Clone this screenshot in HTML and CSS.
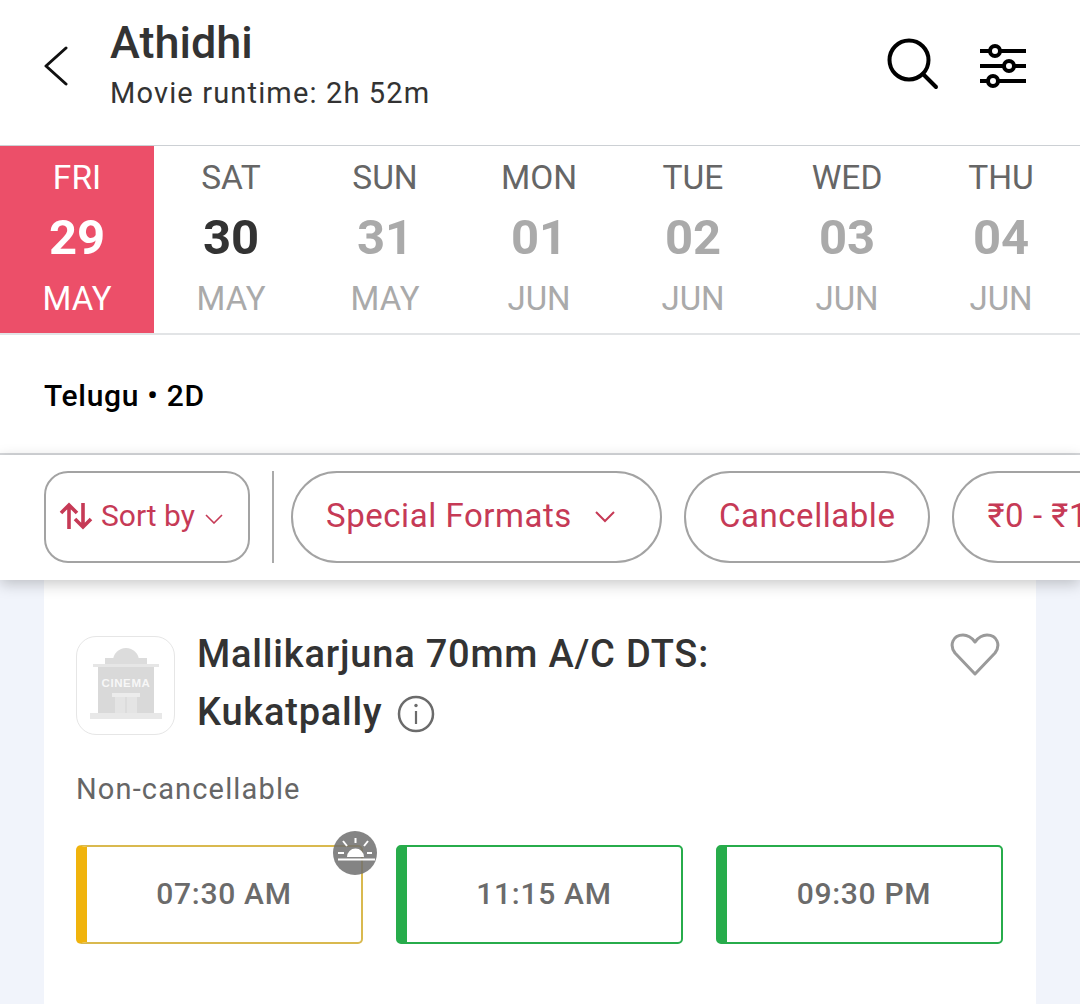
FILE: index.html
```html
<!DOCTYPE html>
<html lang="en">
<head>
<meta charset="UTF-8">
<meta name="viewport" content="width=device-width, initial-scale=1.0">
<title>Athidhi - Showtimes</title>
<link rel="stylesheet" href="styles.css">
</head>
<body>

<header class="top-bar">
  <svg class="back-icon" width="24" height="40" viewBox="0 0 24 40"><path d="M22 2 L2 20 L22 38" fill="none" stroke="#111" stroke-width="3" stroke-linecap="round" stroke-linejoin="round"/></svg>
  <div class="movie-info">
    <h1>Athidhi</h1>
    <p>Movie runtime: 2h 52m</p>
  </div>
  <div class="top-actions">
    <svg class="search-icon" width="52" height="52" viewBox="0 0 52 52"><circle cx="22" cy="22" r="19.5" fill="none" stroke="#000" stroke-width="4"/><path d="M36 36 L49 49" stroke="#000" stroke-width="4" stroke-linecap="round"/></svg>
    <svg width="46" height="44" viewBox="0 0 46 44">
      <path d="M0 7H46M0 22H46M0 37H46" stroke="#000" stroke-width="4"/>
      <circle cx="15" cy="7" r="5" fill="#fff" stroke="#000" stroke-width="4"/>
      <circle cx="29" cy="22" r="5" fill="#fff" stroke="#000" stroke-width="4"/>
      <circle cx="13" cy="37" r="5" fill="#fff" stroke="#000" stroke-width="4"/>
    </svg>
  </div>
</header>

<nav class="dates">
  <div class="date active"><span class="day">FRI</span><span class="num">29</span><span class="month">MAY</span></div>
  <div class="date next"><span class="day">SAT</span><span class="num">30</span><span class="month">MAY</span></div>
  <div class="date"><span class="day">SUN</span><span class="num">31</span><span class="month">MAY</span></div>
  <div class="date"><span class="day">MON</span><span class="num">01</span><span class="month">JUN</span></div>
  <div class="date"><span class="day">TUE</span><span class="num">02</span><span class="month">JUN</span></div>
  <div class="date"><span class="day">WED</span><span class="num">03</span><span class="month">JUN</span></div>
  <div class="date"><span class="day">THU</span><span class="num">04</span><span class="month">JUN</span></div>
</nav>

<div class="lang-row">Telugu &bull; 2D</div>

<div class="filters">
  <button class="chip sort">
    <svg width="36" height="28" viewBox="0 0 36 28"><path d="M11 27V3M3 11L11 3L19 11M25 1V25M17 17L25 25L33 17" fill="none" stroke="#c63a56" stroke-width="3.6"/></svg>
    <span>Sort by</span>
    <svg class="sort-caret" width="20" height="10" viewBox="0 0 20 10"><path d="M2 1L10 9L18 1" fill="none" stroke="#c63a56" stroke-width="1.6"/></svg>
  </button>
  <div class="divider"></div>
  <button class="chip pill">
    Special Formats
    <svg class="chip-caret" width="22" height="12" viewBox="0 0 22 12"><path d="M2 1L11 10L20 1" fill="none" stroke="#c63a56" stroke-width="2"/></svg>
  </button>
  <button class="chip pill">Cancellable</button>
  <button class="chip pill">&#8377;0 - &#8377;100</button>
</div>

<main class="list">
  <section class="card">
    <div class="cinema-head">
      <div class="logo">
        <svg width="72" height="76" viewBox="0 0 72 76">
          <rect x="0" y="65" width="72" height="6" fill="#e8e8e8"/>
          <circle cx="36" cy="13" r="13" fill="#dcdcdc"/>
          <rect x="15" y="10" width="42" height="18" fill="#dcdcdc"/>
          <rect x="3" y="16" width="66" height="3" fill="#e6e6e6"/>
          <rect x="8" y="19" width="56" height="46" fill="#d9d9d9"/>
          <text x="36" y="39" text-anchor="middle" class="logo-text">CINEMA</text>
          <rect x="22" y="45" width="28" height="4" fill="#ececec"/>
          <rect x="25" y="49" width="22" height="16" fill="#e4e4e4"/>
          <path d="M36 49V65" stroke="#d4d4d4" stroke-width="1"/>
        </svg>
      </div>
      <h2>Mallikarjuna 70mm A/C DTS: Kukatpally
        <svg class="info-icon" width="38" height="38" viewBox="0 0 38 38"><circle cx="19" cy="19" r="17" fill="none" stroke="#6b6b6b" stroke-width="2.5"/><path d="M19 16V29" stroke="#6b6b6b" stroke-width="2.2"/><circle cx="19" cy="10.5" r="1.7" fill="#6b6b6b"/></svg>
      </h2>
      <svg class="heart" width="50" height="44" viewBox="0 0 50 44"><path d="M25 41L5 20C-1 12 3 2 13 2C18 2 22 5 25 9C28 5 32 2 37 2C47 2 51 12 45 20Z" fill="none" stroke="#9a9a9a" stroke-width="3" stroke-linejoin="round"/></svg>
    </div>
    <p class="note">Non-cancellable</p>
    <div class="times">
      <a class="time morning">07:30 AM
        <span class="badge">
          <svg width="44" height="44" viewBox="0 0 44 44">
            <path d="M14 26A8.5 8.5 0 0 1 31 26Z" fill="#fff"/>
            <path d="M5 28.5H42" stroke="#fff" stroke-width="2"/>
            <path d="M22.5 7V12M10 10L14 15M35 10L31 15M5 22H11M34 22H39" stroke="#fff" stroke-width="2"/>
          </svg>
        </span>
      </a>
      <a class="time">11:15 AM</a>
      <a class="time">09:30 PM</a>
    </div>
  </section>
</main>

</body>
</html>
```

FILE: styles.css
```css
* { box-sizing: border-box; }
html, body { height: 100%; }
body {
  margin: 0;
  font-family: Roboto, "Liberation Sans", sans-serif;
  background: #f1f4fb;
  overflow: hidden;
}

/* Top bar */
.top-bar {
  height: 147px;
  background: #fff;
  border-bottom: 2px solid #ccd0d4;
  display: flex;
  align-items: center;
  padding: 0 54px 18px 44px;
}
.back-icon { margin-right: 42px; margin-top: 4px; }
.movie-info { flex: 1; }
.movie-info h1 { margin: 0; font-size: 45px; line-height: 50px; font-weight: 500; color: #333; }
.movie-info p { margin: 8px 0 0; font-size: 29px; line-height: 34px; color: #333; letter-spacing: 1.15px; }
.top-actions { display: flex; align-items: center; gap: 41px; margin-top: 4px; }
.search-icon { margin-top: -3px; }

/* Date strip */
.dates {
  display: flex;
  height: 189px;
  background: #fff;
  border-bottom: 2px solid #e2e4e6;
  margin-top: -1px;
}
.date {
  width: 154px;
  flex-shrink: 0;
  display: flex;
  flex-direction: column;
  align-items: center;
  color: #aaa;
}
.date .day { margin-top: 14px; font-size: 33.5px; line-height: 36px; color: #666; }
.date .num { margin-top: 14px; font-size: 49px; line-height: 56px; font-weight: 700; }
.date .month { margin-top: 14px; font-size: 33px; line-height: 38px; }
.date.next .num { color: #333; }
.date.active { background: #ec4f69; color: #fff; }
.date.active .day { color: #fff; }

/* Language row */
.lang-row {
  height: 120px;
  background: #fff;
  border-bottom: 2px solid #d6d8db;
  display: flex;
  align-items: center;
  padding: 3px 0 0 44px;
  font-size: 30px;
  font-weight: 500;
  letter-spacing: 0.7px;
  color: #000;
}

/* Filters */
.filters {
  position: relative;
  z-index: 2;
  height: 125px;
  background: #fff;
  display: flex;
  align-items: flex-start;
  gap: 22px;
  padding: 16px 0 0 44px;
  box-shadow: 0 4px 14px rgba(0,0,0,0.22);
  overflow: hidden;
}
.chip {
  flex-shrink: 0;
  height: 92px;
  display: flex;
  align-items: center;
  background: #fff;
  border: 2px solid #a3a3a3;
  color: #c63a56;
  font-family: inherit;
  font-size: 33px;
  letter-spacing: 0.55px;
  white-space: nowrap;
}
.chip.sort { width: 206px; border-radius: 24px; padding: 0 0 3px 12px; font-size: 30px; letter-spacing: 0; gap: 7px; }
.sort-caret { margin-left: 2px; margin-top: 6px; }
.chip.pill { border-radius: 46px; padding: 0 33px 4px; }
.chip-caret { margin-left: 22px; margin-right: 11px; margin-top: 4px; }
.divider { width: 2px; height: 92px; background: #aaa; flex-shrink: 0; margin-right: -5px; }

/* Cinema card */
.list { padding: 0 44px; }
.card {
  background: #fff;
  padding: 56px 33px 0 32px;
  height: 424px;
}
.cinema-head { display: flex; align-items: flex-start; }
.logo {
  width: 99px;
  height: 99px;
  flex-shrink: 0;
  border: 1px solid #e6e6e6;
  border-radius: 20px;
  display: flex;
  align-items: center;
  justify-content: center;
  margin-right: 22px;
}
.logo-text { font-family: "Liberation Sans", sans-serif; font-size: 11.5px; font-weight: 700; fill: #f7f7f7; letter-spacing: 0.6px; }
.cinema-head h2 {
  margin: -11px 0 0;
  width: 570px;
  font-size: 38px;
  line-height: 58px;
  font-weight: 500;
  letter-spacing: 0.8px;
  color: #333;
}
.info-icon { vertical-align: -8px; margin-left: 4px; }
.heart { margin-left: auto; margin-top: -3px; margin-right: 3px; }
.note { margin: 31px 0 0; font-size: 29px; line-height: 34px; color: #666; letter-spacing: 1.15px; }

/* Showtimes */
.times { display: flex; gap: 33px; margin-top: 39px; }
.time {
  position: relative;
  width: 287px;
  height: 99px;
  display: flex;
  align-items: center;
  justify-content: center;
  padding-bottom: 2px;
  border: 2px solid #27ac4b;
  border-left-width: 11px;
  border-radius: 5px;
  font-size: 30px;
  font-weight: 500;
  color: #6b6b6b;
  letter-spacing: 0.7px;
}
.time.morning { border-color: #d9b94f; border-left-color: #f0b30d; }
.badge {
  position: absolute;
  top: -16px;
  right: -16px;
  width: 44px;
  height: 44px;
  border-radius: 50%;
  background: rgba(110,110,110,0.85);
}
.badge svg { display: block; }
```
